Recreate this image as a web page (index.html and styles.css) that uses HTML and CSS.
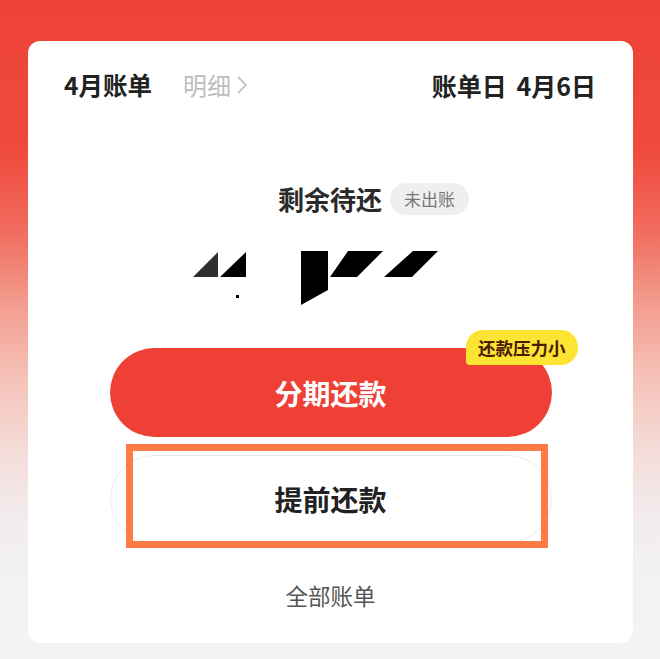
FILE: index.html
```html
<!DOCTYPE html>
<html lang="zh">
<head>
<meta charset="utf-8">
<link rel="stylesheet" href="styles.css">
</head>
<body>
<div class="card">
  <div class="head">
    <div class="head-left">
      <span class="month">4月账单</span>
      <span class="detail">明细<svg class="chev" width="12" height="20" viewBox="0 0 12 20"><polyline points="2,2 10,10 2,18" fill="none" stroke="#c4c4c4" stroke-width="1.8"/></svg></span>
    </div>
    <span class="billday">账单日 4月6日</span>
  </div>
  <div class="title-row">
    <span class="title">剩余待还</span>
    <span class="chip">未出账</span>
  </div>
  <svg class="amount" width="605" height="65" viewBox="28 245 605 65">
    <polygon points="193,277 218,252 218,277" fill="#2e2e2e"/>
    <polygon points="220,277 246,252 246,277" fill="#000"/>
    <rect x="236" y="295" width="3" height="3" fill="#000"/>
    <polygon points="301,251 328,251 328,290 301,305" fill="#000"/>
    <polygon points="348,251 383,251 357,277 330,277" fill="#000"/>
    <polygon points="413,251 438,251 412,277 384,277" fill="#000"/>
  </svg>
  <div class="actions">
    <div class="btn-primary">
      分期还款
      <span class="badge">还款压力小</span>
    </div>
    <div class="btn-outline">
      提前还款
      <span class="mark"></span>
    </div>
  </div>
  <div class="all">全部账单</div>
</div>
</body>
</html>
```
FILE: styles.css
```css
html, body {
  margin: 0;
  padding: 0;
}
body {
  width: 660px;
  height: 659px;
  overflow: hidden;
  font-family: "Noto Sans CJK SC", "Noto Sans", sans-serif;
  background: linear-gradient(to bottom,
    #ee4237 0px,
    #ef4a3d 150px,
    #f16c5e 230px,
    #f39a8c 300px,
    #f5c3b9 380px,
    #f4dcd8 450px,
    #f2ecee 520px,
    #f2f1f4 580px,
    #f3f3f6 659px);
}
.card {
  margin: 41px 0 0 28px;
  width: 605px;
  height: 602px;
  background: #fff;
  border-radius: 12px;
  display: flex;
  flex-direction: column;
  align-items: center;
  box-sizing: border-box;
  padding-top: 28px;
}
.head {
  width: 100%;
  box-sizing: border-box;
  padding: 0 37px 0 36px;
  display: flex;
  justify-content: space-between;
  align-items: center;
  height: 32px;
}
.head-left {
  display: flex;
  align-items: center;
  gap: 31px;
}
.month, .billday {
  font-size: 24.5px;
  font-weight: 700;
  color: #222;
  line-height: 32px;
}
.billday {
  font-size: 25px;
  word-spacing: 4px;
}
.detail {
  font-size: 24px;
  color: #bdbdbd;
  line-height: 32px;
  display: flex;
  align-items: center;
  gap: 5px;
}
.title-row {
  margin-top: 82px;
  display: flex;
  align-items: center;
  gap: 8px;
  margin-left: 86px;
  height: 32px;
}
.title {
  font-size: 26px;
  font-weight: 700;
  color: #2a2a2a;
  line-height: 32px;
}
.chip {
  background: #efefef;
  color: #777;
  font-size: 17px;
  line-height: 32px;
  height: 32px;
  padding: 0 14px;
  border-radius: 16px;
}
.amount {
  display: block;
  margin-top: 30px;
}
.actions {
  margin-top: 38px;
  width: 442px;
  display: flex;
  flex-direction: column;
  gap: 18px;
}
.btn-primary {
  position: relative;
  height: 89px;
  border-radius: 45px;
  background: #ee4035;
  color: #fff;
  font-size: 28px;
  font-weight: 700;
  display: flex;
  align-items: center;
  justify-content: center;
}
.badge {
  position: absolute;
  top: -18px;
  right: -26px;
  height: 35px;
  line-height: 35px;
  padding: 0 12px;
  background: #fde433;
  color: #4a1c02;
  font-size: 17.5px;
  font-weight: 700;
  border-radius: 17px 17px 17px 4px;
}
.btn-outline {
  position: relative;
  height: 88px;
  box-sizing: border-box;
  border: 1px solid #ececec;
  border-radius: 44px;
  color: #222;
  font-size: 28px;
  font-weight: 700;
  display: flex;
  align-items: center;
  justify-content: center;
}
.mark {
  position: absolute;
  left: 15px;
  top: -12px;
  width: 422px;
  height: 104px;
  box-sizing: border-box;
  border: 7px solid #ff7a45;
}
.all {
  margin-top: 36px;
  font-size: 22.5px;
  color: #555;
  line-height: 32px;
}
```
